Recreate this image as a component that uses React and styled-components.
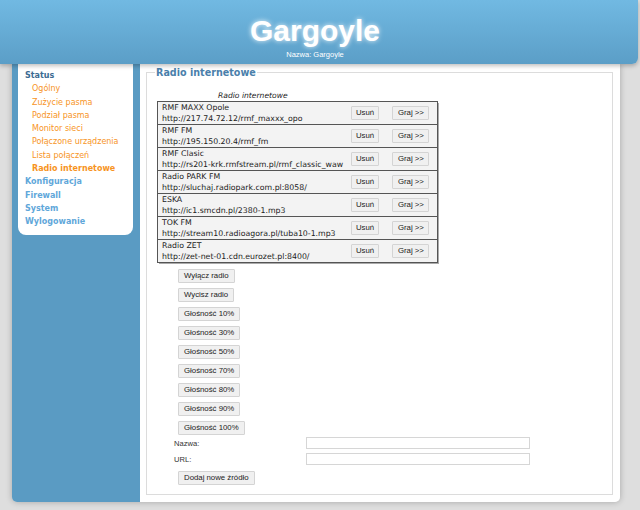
import React from "react";
import styled, { createGlobalStyle } from "styled-components";

const GlobalStyle = createGlobalStyle`
  html, body {
    margin: 0;
    padding: 0;
    background: #dedede;
    font-family: "DejaVu Sans", Verdana, sans-serif;
  }
`;

const Page = styled.div`
  width: 640px;
  height: 510px;
  overflow: hidden;
`;

const Header = styled.header`
  height: 64px;
  margin-right: 2px;
  background: linear-gradient(#71b9e2, #5b9ec7);
  border-bottom-right-radius: 6px;
  box-shadow: 0 2px 4px rgba(0, 0, 0, 0.25);
  display: flex;
  flex-direction: column;
  align-items: center;
  padding-right: 8px;
  position: relative;
  z-index: 2;
`;

const Title = styled.h1`
  margin: 14px 0 0;
  font-family: "Liberation Sans", Arial, sans-serif;
  font-size: 30px;
  font-weight: bold;
  color: #fff;
  line-height: 34px;
  text-shadow: 0 0 5px rgba(255, 255, 255, 0.9);
`;

const Subtitle = styled.div`
  margin-top: 2px;
  font-family: "Liberation Sans", Arial, sans-serif;
  font-size: 7.5px;
  color: #fff;
`;

const Body = styled.div`
  display: flex;
  height: 438px;
  margin: 0 20px 0 12px;
  border-radius: 0 0 5px 5px;
  overflow: hidden;
  box-shadow: 0 0 6px rgba(0, 0, 0, 0.25);
`;

const Sidebar = styled.nav`
  width: 128px;
  flex-shrink: 0;
  background: #5a9bc3;
  padding: 0 7px 0 6px;
  box-sizing: border-box;
`;

const Menu = styled.ul`
  list-style: none;
  margin: 0;
  padding: 5px 6px 6px 7px;
  background: #fff;
  border-radius: 0 0 8px 8px;
`;

const MenuItem = styled.li`
  font-size: 8px;
  line-height: 13.3px;
  font-weight: ${({ $sub, $active }) => (!$sub || $active ? "bold" : "normal")};
  color: ${({ $sub, $top }) => ($top ? "#3c6b92" : $sub ? "#f7941e" : "#5fa7da")};
  padding-left: ${({ $sub }) => ($sub ? "7px" : "0")};
  white-space: nowrap;
`;

const Content = styled.main`
  flex: 1;
  background: #fff;
  padding: 3px 7px 7px 6px;
`;

const Fieldset = styled.fieldset`
  margin: 0;
  height: 100%;
  box-sizing: border-box;
  border: 1px solid #dcdcdc;
  padding: 0 10px;
`;

const Legend = styled.legend`
  font-size: 9.6px;
  font-weight: bold;
  color: #4a80ab;
  padding: 0 1px;
  margin-left: -2px;
`;

const Table = styled.table`
  border-collapse: collapse;
  margin-top: 13px;
  width: 281px;
`;

const Caption = styled.caption`
  font-size: 7.6px;
  font-style: italic;
  color: #222;
  padding: 0 0 1px 61px;
  line-height: 9px;
  text-align: left;
`;

const Rows = styled.tbody`
  box-shadow: 1px 1px 0 #aaa;
`;

const Row = styled.tr`
  background: #f3f3f3;
  border: 1px solid #555;
`;

const NameCell = styled.td`
  padding: 0 4px;
  height: 22px;
  font-size: 7.8px;
  line-height: 11px;
  color: #222;
  white-space: nowrap;
`;

const BtnCell = styled.td`
  padding: ${({ $pad }) => $pad};
  height: 22px;
`;

const Button = styled.button`
  font-family: "Liberation Sans", Arial, sans-serif;
  font-size: 7.8px;
  color: #222;
  height: 14px;
  padding: ${({ $w }) => ($w ? "0" : "0 5px")};
  background: #f0f0f0;
  border: 1px solid #d4d4d4;
  border-radius: 1px;
  line-height: 12px;
  display: block;
  white-space: nowrap;
  text-align: center;
  width: ${({ $w }) => ($w ? $w + "px" : "auto")};
`;

const Controls = styled.div`
  display: flex;
  flex-direction: column;
  align-items: flex-start;
  gap: 5px;
  padding-left: 21px;
  margin-top: 6px;
`;

const Form = styled.div`
  display: grid;
  grid-template-columns: 132px 224px;
  row-gap: 4px;
  margin-top: 2px;
  padding-left: 17px;
  align-items: center;
`;

const Label = styled.label`
  font-family: "Liberation Sans", Arial, sans-serif;
  font-size: 7.6px;
  color: #333;
`;

const Input = styled.input`
  height: 12px;
  box-sizing: border-box;
  border: 1px solid #d6d6d6;
  padding: 0;
  margin: 0;
`;

const stations = [
  ["RMF MAXX Opole", "http://217.74.72.12/rmf_maxxx_opo"],
  ["RMF FM", "http://195.150.20.4/rmf_fm"],
  ["RMF Clasic", "http://rs201-krk.rmfstream.pl/rmf_classic_waw"],
  ["Radio PARK FM", "http://sluchaj.radiopark.com.pl:8058/"],
  ["ESKA", "http://ic1.smcdn.pl/2380-1.mp3"],
  ["TOK FM", "http://stream10.radioagora.pl/tuba10-1.mp3"],
  ["Radio ZET", "http://zet-net-01.cdn.eurozet.pl:8400/"],
];

const volumes = [10, 30, 50, 70, 80, 90, 100];

const App = () => {
  return (
    <Page>
      <GlobalStyle />
      <Header>
        <Title>Gargoyle</Title>
        <Subtitle>Nazwa: Gargoyle</Subtitle>
      </Header>
      <Body>
        <Sidebar>
          <Menu>
            <MenuItem $top>Status</MenuItem>
            <MenuItem $sub>Ogólny</MenuItem>
            <MenuItem $sub>Zużycie pasma</MenuItem>
            <MenuItem $sub>Podział pasma</MenuItem>
            <MenuItem $sub>Monitor sieci</MenuItem>
            <MenuItem $sub>Połączone urządzenia</MenuItem>
            <MenuItem $sub>Lista połączeń</MenuItem>
            <MenuItem $sub $active>Radio internetowe</MenuItem>
            <MenuItem>Konfiguracja</MenuItem>
            <MenuItem>Firewall</MenuItem>
            <MenuItem>System</MenuItem>
            <MenuItem>Wylogowanie</MenuItem>
          </Menu>
        </Sidebar>
        <Content>
          <Fieldset>
            <Legend>Radio internetowe</Legend>
            <Table>
              <Caption>Radio internetowe</Caption>
              <Rows>
                {stations.map(([name, url]) => (
                  <Row key={name}>
                    <NameCell>
                      {name}
                      <br />
                      {url}
                    </NameCell>
                    <BtnCell $pad="0 6px 0 2px">
                      <Button $w={28}>Usuń</Button>
                    </BtnCell>
                    <BtnCell $pad="0 7px 0 7px">
                      <Button $w={37}>Graj &gt;&gt;</Button>
                    </BtnCell>
                  </Row>
                ))}
              </Rows>
            </Table>
            <Controls>
              <Button>Wyłącz radio</Button>
              <Button>Wycisz radio</Button>
              {volumes.map((v) => (
                <Button key={v}>Głośność {v}%</Button>
              ))}
            </Controls>
            <Form>
              <Label>Nazwa:</Label>
              <Input />
              <Label>URL:</Label>
              <Input />
            </Form>
            <Controls>
              <Button>Dodaj nowe źródło</Button>
            </Controls>
          </Fieldset>
        </Content>
      </Body>
    </Page>
  );
};

export default App;
